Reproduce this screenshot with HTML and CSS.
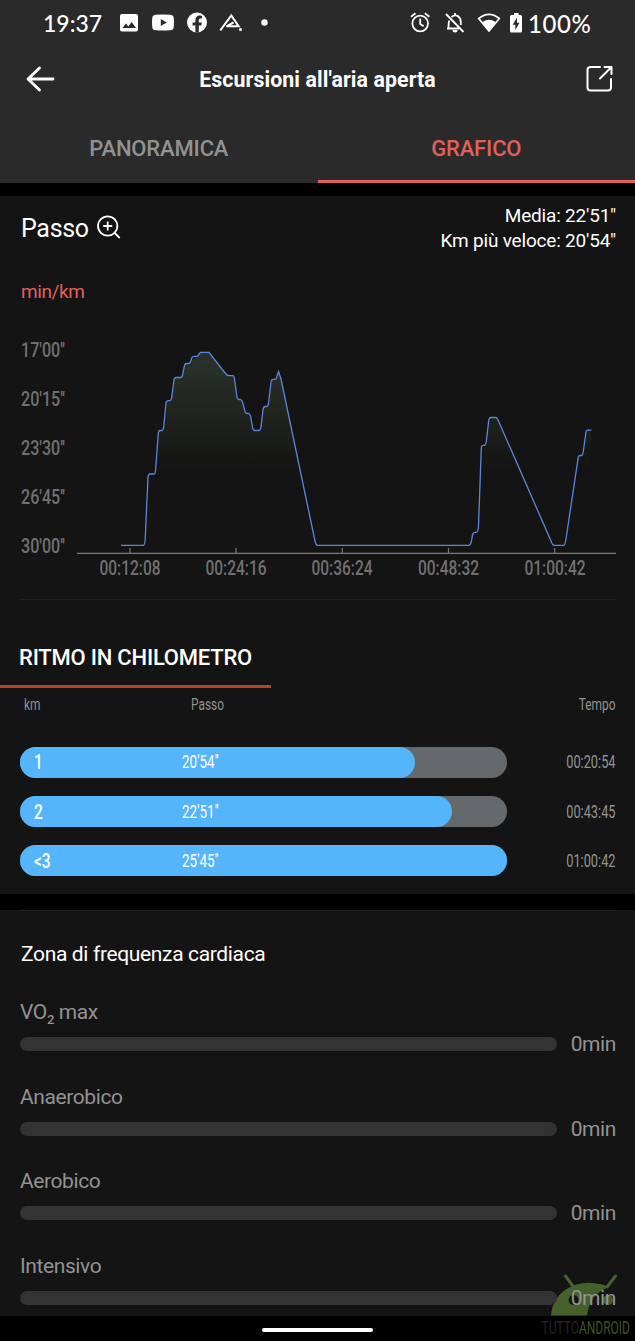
FILE: index.html
```html
<!DOCTYPE html>
<html lang="it">
<head>
    <meta charset="UTF-8">
    <meta name="viewport" content="width=device-width, initial-scale=1.0">
    <title>Escursioni all'aria aperta</title>
    <link rel="stylesheet" href="styles.css">
</head>
<body>
    <header class="header">
        <div class="status-bar">
            <span class="clock">19:37</span>
            <svg class="status-left" width="152" height="24" viewBox="118 11 152 24" fill="#fff">
                <path fill-rule="evenodd" d="M122 14h14a2 2 0 0 1 2 2v13.500a2 2 0 0 1-2 2h-14a2 2 0 0 1-2-2V16a2 2 0 0 1 2-2zM122.500 28h13.500l-4.300-6-3.400 4.500-2.300-2.900z"/>
                <path fill-rule="evenodd" d="M156 14.800q7-.6 14 0 3.600 0 3.800 3.500.4 4.200 0 8.400-.2 3.500-3.800 3.500-7 .5-14 0-3.600 0-3.800-3.500-.4-4.200 0-8.400.2-3.500 3.800-3.500zM160.800 19v7l6-3.500z"/>
                <circle cx="197" cy="22.500" r="10"/>
                <path fill="#2a2a2a" d="M195.400 32.500v-6.900h-2.800v-3.200h2.800v-2.300c0-3 1.700-4.500 4.300-4.500l2.300.2v2.600h-1.400c-1.400 0-1.800.8-1.800 1.700v2.300h3l-.5 3.200h-2.500v6.900z"/>
                <path fill="none" stroke="#fff" stroke-width="2" d="M220.300 30.300L231.300 15.500l7.300 10.800H226.500l7-3.800"/>
                <circle cx="240.500" cy="29.500" r="1.500"/>
                <circle cx="264.500" cy="22.500" r="3.200"/>
            </svg>
            <svg class="status-right" width="116" height="26" viewBox="409 10 116 26" fill="none" stroke="#fff" stroke-width="1.800">
                <circle cx="420.200" cy="23.500" r="7.800"/>
                <path d="M420.200 18.500v5.500l3.500 2.200M411 16.800l4.500-3.500M429.400 16.800l-4.500-3.500"/>
                <path d="M446 14l17.500 18M449.500 20.500c-1 1.500-1 3-1 7.500M447 28.500h12M451.500 17c4.500-3.500 9.300-.5 9.300 5v3M455 15v-2"/>
                <path fill="#fff" stroke="none" d="M452.500 30h5a2.500 2.500 0 0 1-5 0z"/>
                <path stroke-linejoin="round" d="M478.700 18.500q10.300-8.300 20.600 0L489 31z"/>
                <path fill="#fff" stroke="none" d="M482.500 22q6.500-4.500 13 0L489 31z"/>
                <path fill="#fff" stroke="none" d="M514 13h4.500v2h2q1.500 0 1.500 1.500v14.500q0 1.500-1.500 1.500h-9q-1.500 0-1.500-1.500V16.500q0-1.500 1.500-1.500h2.500z"/>
                <path fill="#2a2a2a" stroke="none" d="M517 17.500l-4.300 7.200h2.600V30l4.200-7.300H517z"/>
            </svg>
            <span class="battery">100%</span>
        </div>
        <div class="title-bar">
            <svg width="30" height="30" viewBox="25 64 30 30" fill="none" stroke="#fff" stroke-width="2.800" stroke-linecap="round" stroke-linejoin="round">
                <path d="M53 79H28.500M39.500 68L28 79l11.500 11"/>
            </svg>
            <h1>Escursioni all'aria aperta</h1>
            <svg width="30" height="30" viewBox="585 64 30 30" fill="none" stroke="#fff" stroke-width="2" stroke-linecap="round" stroke-linejoin="round">
                <path d="M600 67h-9.500q-3 0-3 3v17.500q0 3 3 3H608q3 0 3-3V79M604.500 67h7v7M611 67.500l-11 11"/>
            </svg>
        </div>
        <nav class="tabs">
            <a class="tab"><span>PANORAMICA</span></a>
            <a class="tab active"><span>GRAFICO</span></a>
        </nav>
    </header>

    <section class="panel pace">
        <div class="pace-head">
            <h2>Passo</h2>
            <svg width="26" height="26" viewBox="96 213 26 26" fill="none" stroke="#fff" stroke-width="1.800">
                <circle cx="107.700" cy="225" r="9.700"/>
                <path d="M114.700 232l5 5M103.200 225h9M107.700 220.500v9"/>
            </svg>
            <div class="summary">
                <div>Media: 22'51"</div>
                <div>Km più veloce: 20'54"</div>
            </div>
        </div>
        <div class="unit">min/km</div>
        <svg class="chart" width="635" height="260" viewBox="0 330 635 260">
            <defs>
                <linearGradient id="area" gradientUnits="userSpaceOnUse" x1="0" y1="350" x2="0" y2="470">
                    <stop offset="0" stop-color="#2c332d"/>
                    <stop offset=".5" stop-color="#20251e"/>
                    <stop offset="1" stop-color="#141414"/>
                </linearGradient>
            </defs>
            <path fill="url(#area)" d="M149 474L155 473 159 431 163 430 167 401 171 400 175 378 182 377 185 364 190 363 200 352 209 352 227 375 234 376 238 399 242 400 246 413 250 414 253 430 260 430 264 407 268 406 272 380 276 379 279 372 301 474zM481 474L482 446 486 445 490 418 497 418 523 474zM576 474L579 456 583 455 587 430 591 430V474z"/>
            <path class="line" d="M121 545.300H143.500Q145 545 145.300 537L148 477Q148.300 474 150 474H154Q155.300 474 155.600 470L158.200 434Q158.500 430.500 160 430.500H162Q163.500 430 163.800 426L166 403Q166.500 400.700 168 400.700H170Q171.200 400.500 171.600 398L174 380Q174.500 377.500 176 377.500H181Q182 377 182.500 375L184.500 365.500Q185 363.500 186.500 363.500H189Q190.300 363 191 360.500L192 357.500Q192.500 356.300 194 356.300H197Q198 356 199 354L200.500 352.300H209L225 373Q227 375.700 229 375.700H233Q234.200 376 234.500 379L237 397Q237.300 399.500 239 399.500H240.500Q242 400 242.500 402L245 411.500Q245.500 413.500 247.500 413.500H249Q250 414 250.500 416L252.700 428Q253 430.500 255 430.500H259Q260.500 430.500 261 427L263 410Q263.500 406.500 265 406.500H267Q268.300 406 268.700 402L271 382Q271.500 379.300 273 379.300H275.500Q276.500 379 277 376L278.500 371.500 281 379 315 541Q316 545.300 317.500 545.300H469Q470.500 545 471.500 541L472.500 535Q473.300 532.300 475 532.300H476.500Q478 532 478.500 526L481.300 448Q481.500 445.300 483 445.300H484.500Q486 445 486.500 440L488.800 420Q489.300 417.500 490.500 417.500H496Q497 417.500 498.500 421L551 541Q552.500 545.300 554 545.300H564Q565 545 566 539L578 459Q578.500 455.500 580 455.500H581.500Q583 455 583.500 450L586 432Q586.500 430.200 588 430.200H591.500"/>
            <path class="axis" d="M77 553.300H616M130 553v-5M236 553v-5M342.300 553v-5M448.500 553v-5M554.700 553v-5"/>
            <g class="labels" font-size="20.500">
                <text x="21" y="357" textLength="44" lengthAdjust="spacingAndGlyphs">17'00''</text>
                <text x="21" y="406" textLength="44" lengthAdjust="spacingAndGlyphs">20'15''</text>
                <text x="21" y="455" textLength="44" lengthAdjust="spacingAndGlyphs">23'30''</text>
                <text x="21" y="503.500" textLength="44" lengthAdjust="spacingAndGlyphs">26'45''</text>
                <text x="21" y="552.500" textLength="44" lengthAdjust="spacingAndGlyphs">30'00''</text>
                <text x="99.500" y="575.300" textLength="61" lengthAdjust="spacingAndGlyphs">00:12:08</text>
                <text x="205.500" y="575.300" textLength="61" lengthAdjust="spacingAndGlyphs">00:24:16</text>
                <text x="311.500" y="575.300" textLength="61" lengthAdjust="spacingAndGlyphs">00:36:24</text>
                <text x="418" y="575.300" textLength="61" lengthAdjust="spacingAndGlyphs">00:48:32</text>
                <text x="524.500" y="575.300" textLength="61" lengthAdjust="spacingAndGlyphs">01:00:42</text>
            </g>
        </svg>
        <hr>
        <h3 class="split-title">RITMO IN CHILOMETRO</h3>
        <div class="split-head">
            <span class="din">km</span>
            <span class="din">Passo</span>
            <span class="din right">Tempo</span>
        </div>
        <div class="split">
            <div class="track"><div class="fill" style="width: 81.100%"><b class="din">1</b><span class="din">20'54''</span></div></div>
            <span class="din right">00:20:54</span>
        </div>
        <div class="split">
            <div class="track"><div class="fill" style="width: 88.700%"><b class="din">2</b><span class="din">22'51''</span></div></div>
            <span class="din right">00:43:45</span>
        </div>
        <div class="split">
            <div class="track"><div class="fill" style="width: 100%"><b class="din">&lt;3</b><span class="din">25'45''</span></div></div>
            <span class="din right">01:00:42</span>
        </div>
    </section>

    <section class="panel zones">
        <h4>Zona di frequenza cardiaca</h4>
        <div class="zone">
            <div class="zone-name">VO<span class="sub">2</span> max</div>
            <div class="zone-row"><div class="zone-bar"></div><span>0min</span></div>
        </div>
        <div class="zone">
            <div class="zone-name">Anaerobico</div>
            <div class="zone-row"><div class="zone-bar"></div><span>0min</span></div>
        </div>
        <div class="zone">
            <div class="zone-name">Aerobico</div>
            <div class="zone-row"><div class="zone-bar"></div><span>0min</span></div>
        </div>
        <div class="zone">
            <div class="zone-name">Intensivo</div>
            <div class="zone-row"><div class="zone-bar"></div><span>0min</span></div>
        </div>
    </section>

    <footer class="gesture-bar"><div class="pill"></div></footer>

    <svg class="watermark" width="95" height="71" viewBox="540 1270 95 71">
        <path fill="#46602b" fill-rule="evenodd" d="M551 1315.500C553 1293 571 1283 589 1282.700Q600 1283 610 1287C596 1291 589 1301 587 1315.500zM573.500 1295a5 5 0 1 0 .1 0z"/>
        <circle cx="608" cy="1300" r="5" fill="#46602b"/>
        <path fill="none" stroke="#46602b" stroke-width="3" stroke-linecap="round" d="M565.500 1276l8 11M615.500 1276l-8.500 11"/>
        <text x="541.500" y="1334" font-size="18" fill="#292222" textLength="88.500" lengthAdjust="spacingAndGlyphs">TUTTO<tspan fill="#3e5527">ANDROID</tspan></text>
    </svg>
</body>
</html>
```
FILE: styles.css
```css
* {
    box-sizing: border-box;
}
body {
    margin: 0;
    width: 635px;
    height: 1341px;
    position: relative;
    overflow: hidden;
    background: #000;
    color: #fff;
    font-family: Roboto, sans-serif;
}
h1, h2, h3, h4 {
    margin: 0;
    font-weight: 400;
}
svg {
    display: block;
    flex: none;
}
.header {
    height: 183px;
    background: #2a2a2a;
}
.status-bar {
    display: flex;
    align-items: center;
    height: 46px;
    padding: 0 43px;
    font-family: Lato, sans-serif;
    font-size: 23px;
    font-weight: 500;
}
.clock {
    width: 75px;
}
.status-right {
    margin-left: auto;
}
.battery {
    width: 64px;
    margin-left: 3px;
    font-size: 24px;
    letter-spacing: .6px;
}
.title-bar {
    display: flex;
    align-items: center;
    justify-content: space-between;
    height: 66px;
    padding: 0 20px 0 25px;
}
.title-bar h1 {
    padding: 1px 5px 0 0;
    font-size: 21.3px;
    font-weight: 700;
    letter-spacing: .1px;
}
.tabs {
    display: flex;
    height: 71px;
}
.tab {
    flex: 1;
    display: flex;
    align-items: center;
    justify-content: center;
    padding-top: 5px;
    border-bottom: 3px solid transparent;
    color: #929292;
    font-size: 22px;
    font-weight: 500;
    letter-spacing: -.15px;
}
.tab.active {
    color: #e1605a;
    border-color: #e1605a;
}
.panel {
    background: #141414;
}
.pace {
    height: 698px;
    margin-top: 13px;
}
.pace-head {
    display: flex;
    height: 82px;
    padding: 0 19px 0 21px;
}
.pace-head h2 {
    width: 75px;
    font-size: 25px;
    line-height: 65px;
    letter-spacing: -.3px;
}
.pace-head svg {
    margin-top: 18px;
}
.summary {
    margin-left: auto;
    padding-top: 7px;
    font-size: 19px;
    line-height: 25px;
    letter-spacing: -.2px;
    text-align: right;
}
.unit {
    height: 52px;
    padding-left: 21px;
    color: #e1605a;
    font-size: 19px;
    line-height: 28px;
    letter-spacing: -.4px;
}
.line {
    fill: none;
    stroke: #5b86dd;
    stroke-width: 1.3;
}
.axis {
    fill: none;
    stroke: #777;
    stroke-width: 1.2;
}
.labels {
    fill: #707070;
    font-weight: 500;
}
hr {
    height: 1px;
    margin: 9px 19px 0 21px;
    border: 0;
    background: #222;
}
.split-title {
    width: 271px;
    height: 88px;
    padding: 44px 0 0 19px;
    border-bottom: 3px solid #b9402a;
    font-size: 22px;
    font-weight: 500;
    line-height: 28px;
    letter-spacing: -.22px;
    white-space: nowrap;
}
.din {
    display: inline-block;
    transform: scaleX(.73);
    transform-origin: left;
    white-space: nowrap;
}
.din.right {
    transform-origin: right;
}
.split-head {
    display: grid;
    grid-template-columns: 167px 1fr auto;
    height: 49px;
    padding: 4px 20px 0 24px;
    color: #929292;
    font-size: 17px;
    line-height: 24px;
}
.split-head .din {
    transform: scaleX(.7);
}
.split {
    display: flex;
    align-items: center;
    justify-content: space-between;
    height: 49.4px;
    padding: 1px 20px 0 20px;
    color: #929292;
    font-size: 17.5px;
}
.track {
    width: 487px;
    height: 31px;
    border-radius: 16px;
    background: #66696c;
}
.fill {
    display: flex;
    align-items: center;
    height: 31px;
    padding-left: 14px;
    border-radius: 16px;
    background: #55b5fa;
    color: #fff;
}
.fill b {
    width: 148px;
    font-size: 21px;
    font-weight: 500;
}
.fill span {
    transform: scaleX(.77);
}
.zones {
    height: 406px;
    margin-top: 16px;
    padding: 0 19px 0 20px;
}
.zones h4 {
    height: 85px;
    padding-top: 29px;
    border-top: 1px solid #222;
    font-size: 21px;
    line-height: 28px;
    letter-spacing: -.35px;
    text-indent: 1px;
}
.zone {
    height: 84.7px;
    color: #929292;
    font-size: 21px;
    letter-spacing: -.4px;
}
.zone-name {
    height: 35px;
    line-height: 34px;
}
.sub {
    position: relative;
    top: 5px;
    font-size: 13px;
    font-weight: 500;
}
.zone-row {
    position: relative;
    z-index: 1;
    display: flex;
    align-items: center;
    justify-content: space-between;
    height: 28px;
}
.zone-bar {
    width: 537px;
    height: 14px;
    border-radius: 7px;
    background: #333;
}
.gesture-bar {
    display: flex;
    justify-content: center;
    height: 25px;
    padding-top: 12px;
    background: #000;
}
.pill {
    width: 111px;
    height: 4px;
    border-radius: 2px;
    background: #fff;
}
.watermark {
    position: absolute;
    left: 540px;
    top: 1270px;
}
```
